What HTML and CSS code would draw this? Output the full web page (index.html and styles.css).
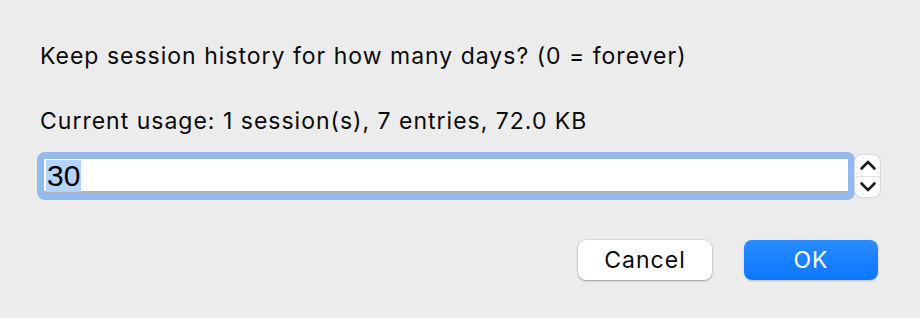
FILE: index.html
```html
<!DOCTYPE html>
<html lang="en">
<head>
    <meta charset="UTF-8">
    <title>Session History</title>
    <link rel="stylesheet" href="styles.css">
</head>
<body>
    <div class="dialog">
        <p class="prompt">Keep session history for how many days? (0 = forever)</p>
        <p class="usage">Current usage: 1 session(s), 7 entries, 72.0 KB</p>

        <div class="field-row">
            <div class="field">
                <span class="value">30</span>
            </div>
            <div class="stepper">
                <div class="step up">
                    <svg width="18" height="12" viewBox="0 0 18 12"><path d="M2.5 9.5 L9 3 L15.5 9.5" fill="none" stroke="#1e1e1e" stroke-width="2.6" stroke-linecap="round" stroke-linejoin="round"/></svg>
                </div>
                <div class="step down">
                    <svg width="18" height="12" viewBox="0 0 18 12"><path d="M2.5 2.5 L9 9 L15.5 2.5" fill="none" stroke="#1e1e1e" stroke-width="2.6" stroke-linecap="round" stroke-linejoin="round"/></svg>
                </div>
            </div>
        </div>

        <div class="buttons">
            <button class="btn cancel">Cancel</button>
            <button class="btn ok">OK</button>
        </div>
    </div>
</body>
</html>
```

FILE: styles.css
```css
* {
    margin: 0;
    padding: 0;
    box-sizing: border-box;
}

body {
    background: #ececec;
    font-family: Inter, "Liberation Sans", Arial, sans-serif;
    color: #0a0a0a;
    width: 920px;
    height: 318px;
    overflow: hidden;
}

.dialog {
    padding: 43px 40px 0 40px;
}

.prompt,
.usage {
    font-size: 23px;
    line-height: 26px;
    letter-spacing: 1px;
}

.usage {
    margin-top: 39px;
}

/* Text field with focus ring */
.field-row {
    display: flex;
    align-items: center;
    margin-top: 18px;
    margin-left: -3px;
}

.field {
    width: 818px;
    height: 48px;
    border: 7px solid #94b9ec;
    border-radius: 8px;
    background: #fff;
    padding-left: 2px;
    box-shadow: inset 0 -2px 0 #b4b4b4;
    display: flex;
    align-items: center;
}

.value {
    background: #b3d4fd;
    font-family: "Liberation Sans", Arial, sans-serif;
    font-size: 30px;
    line-height: 32px;
    padding: 0 1px;
    color: #000;
}

.stepper {
    width: 25px;
    height: 42px;
    background: #fff;
    border-radius: 7px;
    box-shadow: 0 0 0 1px #d9d9d9, 0 1px 1px rgba(0, 0, 0, 0.15);
    display: flex;
    flex-direction: column;
}

.step {
    flex: 1;
    display: flex;
    align-items: center;
    justify-content: center;
}

.step svg {
    display: block;
}

.step.up {
    border-bottom: 1px solid #e2e2e2;
}

/* Buttons */
.buttons {
    display: flex;
    justify-content: flex-end;
    gap: 32px;
    margin-top: 40px;
    margin-right: 2px;
}

.btn {
    width: 134px;
    height: 40px;
    border: none;
    border-radius: 8px;
    font-family: Inter, "Liberation Sans", Arial, sans-serif;
    font-size: 23px;
    letter-spacing: 1px;
}

.cancel {
    background: #fff;
    color: #0a0a0a;
    box-shadow: 0 0 0 0.5px rgba(0, 0, 0, 0.12), 0 1px 2px rgba(0, 0, 0, 0.3);
}

.ok {
    background: linear-gradient(#2a8cff, #0a78fe);
    color: #fff;
    box-shadow: 0 1px 2px rgba(0, 0, 0, 0.2);
}
```
